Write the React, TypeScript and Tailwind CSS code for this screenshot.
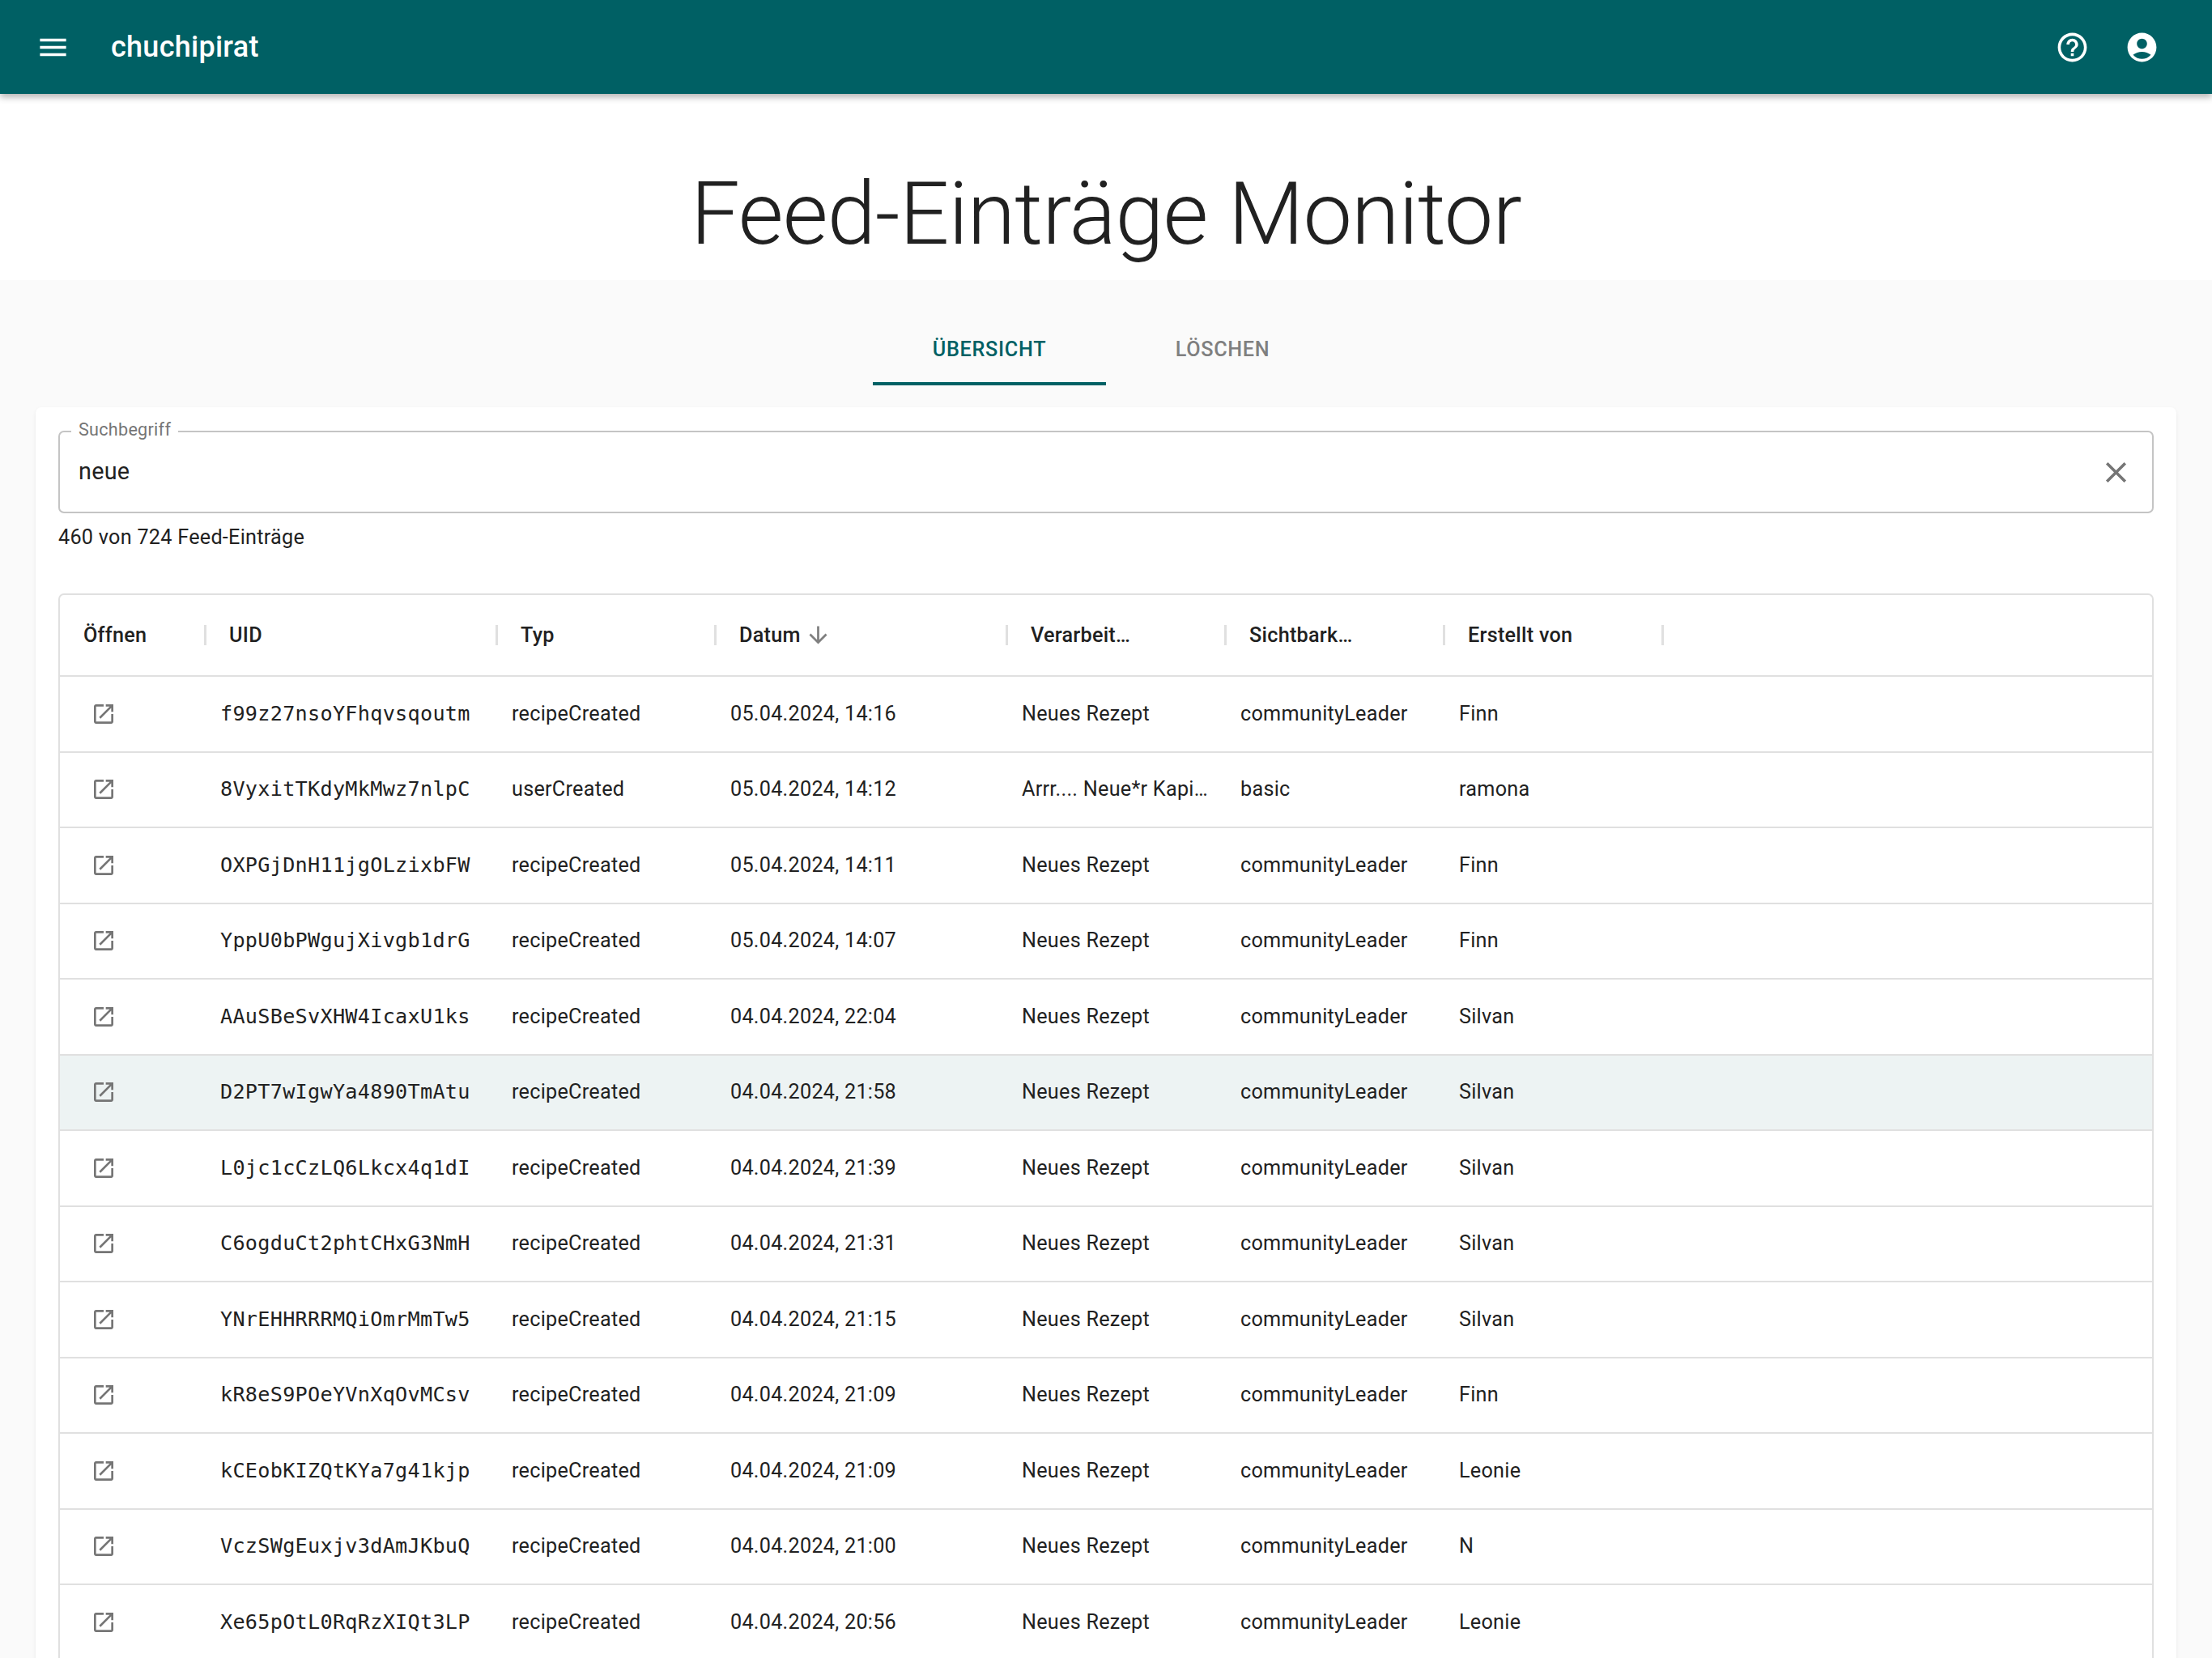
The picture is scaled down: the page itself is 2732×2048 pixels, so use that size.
const MENU = "M3 18h18v-2H3v2zm0-5h18v-2H3v2zm0-7v2h18V6H3z";
const HELP =
  "M11 18h2v-2h-2v2zm1-16C6.48 2 2 6.48 2 12s4.48 10 10 10 10-4.48 10-10S17.52 2 12 2zm0 18c-4.41 0-8-3.59-8-8s3.59-8 8-8 8 3.59 8 8-3.59 8-8 8zm0-14c-2.21 0-4 1.79-4 4h2c0-1.1.9-2 2-2s2 .9 2 2c0 2-3 1.75-3 5h2c0-2.25 3-2.5 3-5 0-2.21-1.79-4-4-4z";
const ACCOUNT =
  "M12 2C6.48 2 2 6.48 2 12s4.48 10 10 10 10-4.48 10-10S17.52 2 12 2zm0 4c1.93 0 3.5 1.57 3.5 3.5S13.93 13 12 13s-3.5-1.57-3.5-3.5S10.07 6 12 6zm0 14c-2.03 0-4.43-.82-6.14-2.88C7.55 15.8 9.68 15 12 15s4.45.8 6.14 2.12C16.43 19.18 14.03 20 12 20z";
const CLOSE =
  "M19 6.41 17.59 5 12 10.59 6.41 5 5 6.41 10.59 12 5 17.59 6.41 19 12 13.41 17.59 19 19 17.59 13.41 12z";
const OPEN_NEW =
  "M19 19H5V5h7V3H5c-1.11 0-2 .9-2 2v14c0 1.1.89 2 2 2h14c1.1 0 2-.9 2-2v-7h-2v7zM14 3v2h3.59l-9.83 9.83 1.41 1.41L19 6.41V10h2V3h-7z";
const ARROW_DOWN = "M20 12l-1.41-1.41L13 16.17V4h-2v12.17l-5.58-5.59L4 12l8 8 8-8z";

interface Entry {
  uid: string;
  type: string;
  date: string;
  text: string;
  visibility: string;
  author: string;
}

const row = (uid: string, date: string, author: string): Entry => ({
  uid,
  type: "recipeCreated",
  date,
  text: "Neues Rezept",
  visibility: "communityLeader",
  author,
});

const ENTRIES: Entry[] = [
  row("f99z27nsoYFhqvsqoutm", "05.04.2024, 14:16", "Finn"),
  {
    uid: "8VyxitTKdyMkMwz7nlpC",
    type: "userCreated",
    date: "05.04.2024, 14:12",
    text: "Arrr.... Neue*r Kapi…",
    visibility: "basic",
    author: "ramona",
  },
  row("OXPGjDnH11jgOLzixbFW", "05.04.2024, 14:11", "Finn"),
  row("YppU0bPWgujXivgb1drG", "05.04.2024, 14:07", "Finn"),
  row("AAuSBeSvXHW4IcaxU1ks", "04.04.2024, 22:04", "Silvan"),
  row("D2PT7wIgwYa4890TmAtu", "04.04.2024, 21:58", "Silvan"),
  row("L0jc1cCzLQ6Lkcx4q1dI", "04.04.2024, 21:39", "Silvan"),
  row("C6ogduCt2phtCHxG3NmH", "04.04.2024, 21:31", "Silvan"),
  row("YNrEHHRRRMQiOmrMmTw5", "04.04.2024, 21:15", "Silvan"),
  row("kR8eS9POeYVnXqOvMCsv", "04.04.2024, 21:09", "Finn"),
  row("kCEobKIZQtKYa7g41kjp", "04.04.2024, 21:09", "Leonie"),
  row("VczSWgEuxjv3dAmJKbuQ", "04.04.2024, 21:00", "N"),
  row("Xe65pOtL0RqRzXIQt3LP", "04.04.2024, 20:56", "Leonie"),
];

function Icon({ d, className }: { d: string; className: string }) {
  return (
    <svg viewBox="0 0 24 24" fill="currentColor" className={className}>
      <path d={d} />
    </svg>
  );
}

function HeaderCell({
  label,
  width,
  sorted,
}: {
  label: string;
  width: string;
  sorted?: boolean;
}) {
  return (
    <div className={`${width} flex shrink-0 items-center justify-between pl-[29px]`}>
      <div className="flex items-center gap-[5px]">
        <span>{label}</span>
        {sorted && <Icon d={ARROW_DOWN} className="h-[33px] w-[33px] text-[#808080]" />}
      </div>
      <div className="-mr-[1px] h-[25px] w-[3px] bg-[#e0e0e0]" />
    </div>
  );
}

export default function App() {
  return (
    <div className="flex h-screen flex-col overflow-hidden bg-[#fafafa] font-['Roboto',sans-serif] text-[25.2px] tracking-[0.27px] text-[#212121]">
      <header className="relative z-10 flex h-[116px] shrink-0 items-center justify-between bg-[#006064] pl-[44px] pr-[65px] text-white shadow-[0_4px_8px_rgba(0,0,0,0.3)]">
        <div className="flex items-center gap-[50px]">
          <Icon d={MENU} className="h-[43px] w-[43px]" />
          <span className="text-[36px] font-medium leading-none">chuchipirat</span>
        </div>
        <div className="flex items-center gap-[43px]">
          <Icon d={HELP} className="h-[43px] w-[43px]" />
          <Icon d={ACCOUNT} className="h-[43px] w-[43px]" />
        </div>
      </header>

      <div className="flex h-[230px] shrink-0 items-center justify-center bg-white pt-[66px]">
        <h1 className="text-[108px] font-light leading-none tracking-[-0.9px]">Feed-Einträge Monitor</h1>
      </div>

      <div className="mt-[44px] flex shrink-0 justify-center">
        <div className="flex h-[86px] w-[288px] items-center justify-center border-b-[4px] border-[#006064] pt-[2px] text-[25.2px] font-medium tracking-[0.7px] text-[#006064]">
          ÜBERSICHT
        </div>
        <div className="flex h-[86px] w-[288px] items-center justify-center border-b-[4px] border-transparent pt-[2px] text-[25.2px] font-medium tracking-[0.7px] text-[#7f7f7f]">
          LÖSCHEN
        </div>
      </div>

      <main className="mx-[44px] mt-[27px] flex-1 rounded-t-[7px] bg-white px-[28px] pt-[29px] shadow-[0_2px_4px_rgba(0,0,0,0.08)]">
        <div className="relative flex h-[102px] items-center justify-between rounded-[7px] border-2 border-[#c4c4c4] pl-[23px] pr-[23px]">
          <span className="absolute left-[14px] top-[-15px] bg-white px-[9px] text-[21.6px] leading-[24px] text-[#757575]">
            Suchbegriff
          </span>
          <span className="text-[28.8px]">neue</span>
          <Icon d={CLOSE} className="h-[43px] w-[43px] text-[#757575]" />
        </div>
        <p className="mt-[15px] h-[84px] leading-[30px]">460 von 724 Feed-Einträge</p>

        <div className="rounded-t-[7px] border-x-2 border-t-2 border-[#e0e0e0]">
          <div className="flex h-[101px] items-center border-b-2 border-[#e0e0e0] font-medium">
            <HeaderCell label="Öffnen" width="w-[180px]" />
            <HeaderCell label="UID" width="w-[360px]" />
            <HeaderCell label="Typ" width="w-[270px]" />
            <HeaderCell label="Datum" width="w-[360px]" sorted />
            <HeaderCell label="Verarbeit…" width="w-[270px]" />
            <HeaderCell label="Sichtbark…" width="w-[270px]" />
            <HeaderCell label="Erstellt von" width="w-[270px]" />
          </div>
          {ENTRIES.map((entry, index) => (
            <div
              key={entry.uid}
              className={`flex h-[93.5px] items-center border-b-2 border-[#e0e0e0] ${
                index === 5 ? "bg-[#edf3f3]" : ""
              }`}
            >
              <div className="flex w-[180px] shrink-0 pl-[38px]">
                <Icon d={OPEN_NEW} className="h-[32px] w-[32px] text-[#757575]" />
              </div>
              <div className="w-[360px] shrink-0 pl-[18px] font-['DejaVu_Sans_Mono',monospace] text-[25.2px]">
                {entry.uid}
              </div>
              <div className="w-[270px] shrink-0 pl-[18px]">{entry.type}</div>
              <div className="w-[360px] shrink-0 pl-[18px]">{entry.date}</div>
              <div className="w-[270px] shrink-0 pl-[18px]">{entry.text}</div>
              <div className="w-[270px] shrink-0 pl-[18px]">{entry.visibility}</div>
              <div className="w-[270px] shrink-0 pl-[18px]">{entry.author}</div>
            </div>
          ))}
        </div>
      </main>
    </div>
  );
}
